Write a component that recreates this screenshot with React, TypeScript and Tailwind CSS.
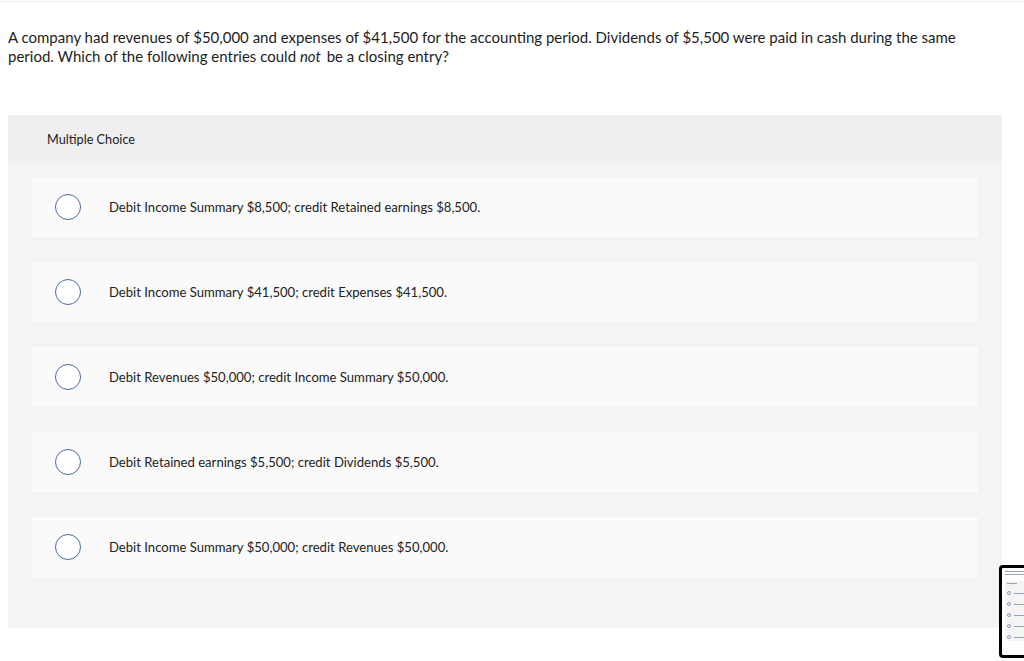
import React from 'react';

const options = [
  'Debit Income Summary $8,500; credit Retained earnings $8,500.',
  'Debit Income Summary $41,500; credit Expenses $41,500.',
  'Debit Revenues $50,000; credit Income Summary $50,000.',
  'Debit Retained earnings $5,500; credit Dividends $5,500.',
  'Debit Income Summary $50,000; credit Revenues $50,000.',
];

function Thumbnail() {
  return (
    <div className="absolute left-[999px] top-[565px] h-[93px] w-[40px] rounded-[4px] border-[3px] border-black bg-white p-[3px]">
      <div className="h-[1px] w-full bg-gray-400" />
      <div className="mt-[2px] h-[1px] w-4/5 bg-gray-400" />
      <div className="mt-[6px] h-[74%] bg-[#f4f4f4] p-[2px]">
        <div className="h-[1px] w-2/5 bg-gray-400" />
        {[0, 1, 2, 3, 4].map((i) => (
          <div key={i} className="mt-[7px] flex items-center gap-[3px]">
            <div className="h-[4px] w-[4px] rounded-full border border-[#8aa0c4]" />
            <div className="h-[1px] w-3 bg-gray-400" />
          </div>
        ))}
      </div>
    </div>
  );
}

export default function App() {
  return (
    <div className="relative h-[661px] w-[1024px] overflow-hidden bg-white font-['Lato',sans-serif] text-[#222]">
      <div className="mt-[1px] h-[1px] w-full bg-[#ececec]" />
      <div className="px-2 pt-[26px]">
        <p className="whitespace-nowrap text-[15px] leading-[19px] text-[#1d1d1d]">
          A company had revenues of $50,000 and expenses of $41,500 for the accounting period. Dividends of $5,500 were paid in cash during the same
          <br />
          period. Which of the following entries could <em className="pr-[2px]">not</em> be a closing entry?
        </p>
      </div>

      <div className="mx-2 mt-[49px] w-[994px] rounded-[2px] bg-[#f4f4f4] pb-[51px]">
        <div className="flex h-[46px] items-center bg-[#efefef] pl-[39px] pt-[3px] text-[12.7px] text-[#222]">
          Multiple Choice
        </div>
        <div className="flex flex-col gap-[25px] px-[24px] pt-[16px]">
          {options.map((text) => (
            <div key={text} className="flex h-[60px] items-center bg-[#fafafa]">
              <div className="ml-[23px] h-[26px] w-[26px] rounded-full border border-[#4a6aa0] bg-white" />
              <span className="ml-[28px] pt-[2px] text-[13.1px] text-[#222]">{text}</span>
            </div>
          ))}
        </div>
      </div>

      <Thumbnail />
    </div>
  );
}
